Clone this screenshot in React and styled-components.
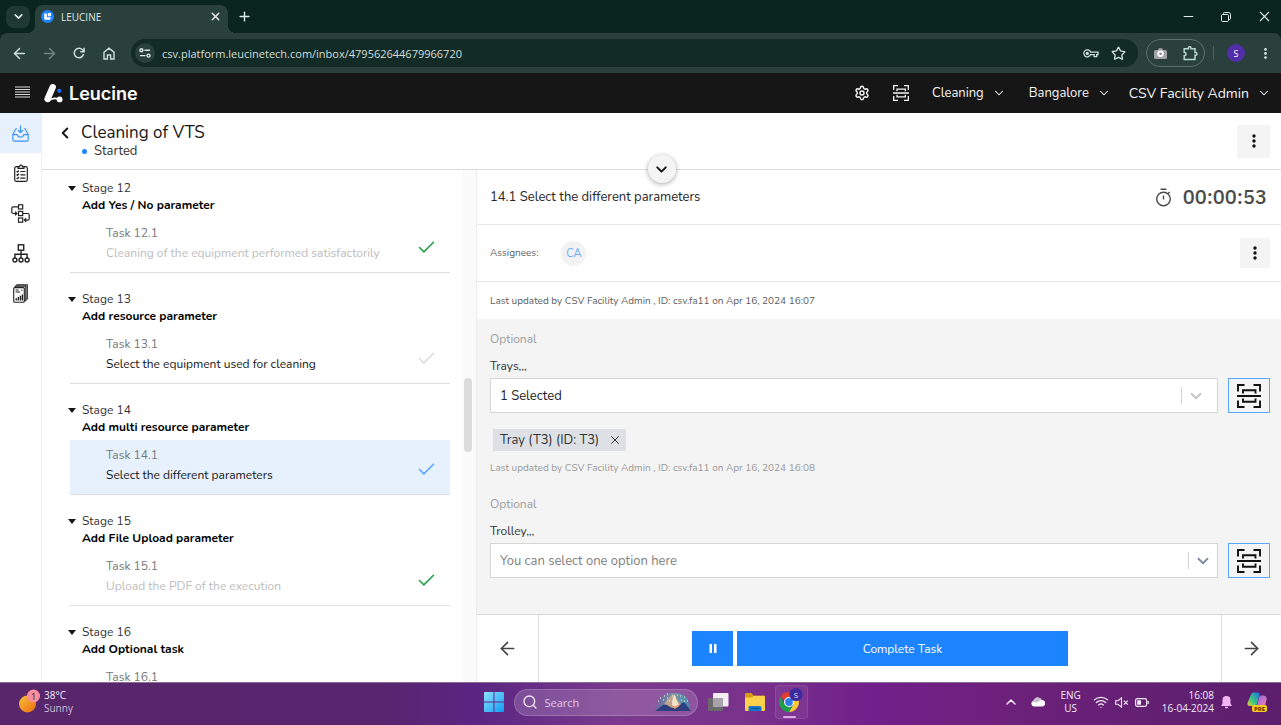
import React, { useState } from 'react';
import styled, { createGlobalStyle } from 'styled-components';
import {
  ArrowLeft,
  ArrowRight,
  Check,
  ChevronDown,
  ChevronLeft,
  ChevronUp,
  Minus,
  Plus,
  Search,
  Settings,
  Star,
  Wifi,
  X,
} from 'lucide-react';

const GlobalStyle = createGlobalStyle`
  * {
    box-sizing: border-box;
  }
  body {
    margin: 0;
    background: #fff;
    font-family: Nunito, Lato, sans-serif;
    color: #161616;
  }
  button, input, select {
    font: inherit;
    color: inherit;
  }
  svg {
    display: block;
    flex-shrink: 0;
  }
`;

const Screen = styled.div`
  display: flex;
  flex-direction: column;
  height: 100vh;
  overflow: hidden;
`;

const IconButton = styled.button`
  display: flex;
  align-items: center;
  justify-content: center;
  padding: 0;
  border: none;
  background: transparent;
  cursor: pointer;
`;

/* ---------- browser ---------- */

const TabStrip = styled.div`
  display: flex;
  align-items: center;
  height: 33px;
  flex-shrink: 0;
  padding-left: 6px;
  background: #0a2420;
  color: #dfe9e6;
  font-family: 'Segoe UI', 'Open Sans', sans-serif;
  font-size: 10px;
`;

const TabSearch = styled(IconButton)`
  width: 24px;
  height: 22px;
  border-radius: 8px;
  background: #1f3834;
`;

const Tab = styled.div`
  position: relative;
  display: flex;
  align-items: center;
  align-self: flex-end;
  width: 193px;
  height: 28px;
  margin-left: 5px;
  padding: 0 6px 5px 6px;
  gap: 7px;
  border-radius: 8px 8px 0 0;
  background: #29403c;

  /* flared bottom corners */
  &::before,
  &::after {
    content: '';
    position: absolute;
    bottom: 0;
    width: 8px;
    height: 8px;
  }
  &::before {
    right: 100%;
    background: radial-gradient(circle at 0 0, transparent 8px, #29403c 8px);
  }
  &::after {
    left: 100%;
    background: radial-gradient(circle at 100% 0, transparent 8px, #29403c 8px);
  }
`;

const TabTitle = styled.span`
  flex: 1;
`;

const NewTab = styled(IconButton)`
  margin-left: 9px;
`;

const WindowButtons = styled.div`
  display: flex;
  gap: 4px;
  margin-left: auto;
`;

const WindowButton = styled(IconButton)`
  width: 34px;
  height: 32px;
`;

const ToolbarWrap = styled.div`
  flex-shrink: 0;
  background: #0a2420;
`;

const Toolbar = styled.div`
  display: flex;
  align-items: center;
  height: 40px;
  padding: 0 9px 0 4px;
  border-radius: 7px 7px 0 0;
  background: #29403c;
  color: #cfe0dc;
  font-family: 'Segoe UI', 'Open Sans', sans-serif;
`;

const ToolButton = styled(IconButton)`
  width: 30px;
  height: 28px;
  color: ${({ $dim }) => ($dim ? '#74857f' : '#cfe0dc')};
`;

const AddressBar = styled.div`
  display: flex;
  align-items: center;
  flex: 1;
  height: 28px;
  margin-left: 7px;
  padding: 0 12px 0 4px;
  gap: 7px;
  border-radius: 14px;
  background: #122b27;
`;

const SiteInfo = styled(IconButton)`
  width: 20px;
  height: 20px;
  border-radius: 50%;
  background: #29403c;
`;

const UrlInput = styled.input`
  flex: 1;
  min-width: 0;
  padding: 0;
  border: none;
  outline: none;
  background: transparent;
  color: #d3dfdc;
  font-size: 11px;
`;

const AddressIcons = styled.div`
  display: flex;
  align-items: center;
  gap: 12px;
`;

const Extensions = styled.div`
  display: flex;
  align-items: center;
  justify-content: space-between;
  width: 59px;
  height: 28px;
  margin-left: 8px;
  padding: 0 6px 0 7px;
  border: 1px solid #5c706b;
  border-radius: 14px;
`;

const ToolDivider = styled.span`
  width: 1px;
  height: 14px;
  margin: 0 13px 0 8px;
  background: #4d625d;
`;

const Profile = styled(IconButton)`
  width: 18px;
  height: 18px;
  margin-right: 14px;
  border-radius: 50%;
  background: #512da8;
  color: #fff;
  font-size: 9px;
`;

/* ---------- app header ---------- */

const AppHeader = styled.header`
  display: flex;
  align-items: center;
  height: 40px;
  flex-shrink: 0;
  padding: 0 10px 0 15px;
  background: #161616;
  color: #f4f4f4;
`;

const Brand = styled.a`
  display: flex;
  align-items: center;
  margin-left: 14px;
  gap: 5px;
  color: #fff;
  font-family: Gilroy, Inter, sans-serif;
  font-size: 18px;
  font-weight: 600;
  text-decoration: none;
`;

const HeaderActions = styled.nav`
  display: flex;
  align-items: center;
  margin-left: auto;
  gap: 23px;
`;

const HeaderMenu = styled(IconButton)`
  gap: 8px;
  margin-left: ${({ $user }) => ($user ? '-5px' : '0')};
  font-size: ${({ $user }) => ($user ? '14px' : '13px')};
`;

/* ---------- shell ---------- */

const Body = styled.div`
  display: flex;
  flex: 1;
  min-height: 0;
`;

const SideNav = styled.nav`
  width: 42px;
  flex-shrink: 0;
  border-right: 1px solid #f0f0f0;
`;

const SideItem = styled.a`
  display: flex;
  align-items: center;
  justify-content: center;
  height: 40px;
  background: ${({ $active }) => ($active ? '#e7f1fd' : 'transparent')};
  color: ${({ $active }) => ($active ? '#3c91ff' : '#222')};
`;

const Main = styled.main`
  position: relative;
  display: flex;
  flex-direction: column;
  flex: 1;
  min-width: 0;
`;

const JobHeader = styled.div`
  display: flex;
  align-items: center;
  justify-content: space-between;
  height: 57px;
  flex-shrink: 0;
  padding: 0 11px 0 16px;
  border-bottom: 1px solid #dcdcdc;
`;

const JobInfo = styled.div`
  display: grid;
  grid-template-columns: 14px auto;
  column-gap: 9px;
  align-items: center;
`;

const JobTitle = styled.h1`
  margin: 0;
  font-size: 17px;
  font-weight: 400;
  line-height: 20px;
`;

const JobState = styled.div`
  grid-column: 2;
  display: flex;
  align-items: center;
  gap: 7px;
  padding-left: 1px;
  font-size: 13px;
  line-height: 16px;
  color: #333;

  &::before {
    content: '';
    width: 5px;
    height: 5px;
    border-radius: 50%;
    background: #1d84ff;
  }
`;

const MoreButton = styled(IconButton)`
  width: ${({ $small }) => ($small ? '30px' : '33px')};
  height: ${({ $small }) => ($small ? '30px' : '33px')};
  background: #f4f4f4;
  color: #111;
`;

const ExpandButton = styled(IconButton)`
  position: absolute;
  top: 42px;
  left: 50%;
  z-index: 1;
  width: 28px;
  height: 28px;
  margin-left: -14px;
  border-radius: 50%;
  background: #f4f4f4;
  box-shadow: 0 1px 5px rgba(0, 0, 0, 0.35);
`;

const Columns = styled.div`
  display: flex;
  flex: 1;
  min-height: 0;
`;

/* ---------- stages ---------- */

const StageList = styled.div`
  width: 408px;
  flex-shrink: 0;
  overflow: hidden;
  padding: 9px 0 0 28px;
`;

const Stage = styled.section`
  margin-bottom: 17px;
`;

const StageHead = styled.div`
  display: grid;
  grid-template-columns: 14px auto;
  align-items: center;
  margin: 0 0 4px -2px;
  font-size: 12px;
  line-height: 18px;
  color: #333;
`;

const Caret = styled.span`
  border: 4px solid transparent;
  border-top: 5px solid #161616;
  border-bottom: none;
  justify-self: start;
`;

const StageName = styled.h2`
  grid-column: 2;
  margin: 0;
  font-size: 12px;
  font-weight: 700;
  line-height: 17px;
  color: #000;
`;

const Task = styled.a`
  display: flex;
  align-items: center;
  height: 55px;
  padding: 0 13px 0 36px;
  border-bottom: 1px solid #e0e0e0;
  background: ${({ $active }) => ($active ? '#e7f1fd' : '#fff')};
  color: ${({ $done }) => ($done ? '#bdbdbd' : '#161616')};
  font-size: 12px;
  line-height: 20px;
  text-decoration: none;
`;

const TaskText = styled.span`
  flex: 1;
  align-self: flex-start;
  padding-top: 5px;
`;

const TaskId = styled.span`
  display: block;
  color: #787878;
`;

const TaskCheck = styled(Check)`
  margin-top: 4px;
`;

const ScrollGutter = styled.div`
  width: 14px;
  margin-left: 12px;
  flex-shrink: 0;
  padding: 208px 4px 0 2px;
  background: #fafafa;
`;

const ScrollThumb = styled.div`
  height: 74px;
  border-radius: 4px;
  background: #dcdcdc;
`;

/* ---------- task panel ---------- */

const Panel = styled.section`
  display: flex;
  flex-direction: column;
  flex: 1;
  min-width: 0;
  border-left: 1px solid #ececec;
`;

const PanelRow = styled.div`
  display: flex;
  align-items: center;
  height: ${({ $height }) => $height}px;
  flex-shrink: 0;
  padding: 0 11px 0 13px;
  border-bottom: 1px solid ${({ $plain }) => ($plain ? '#f4f4f4' : '#e8e8e8')};
  font-size: 10px;
  color: #5c5c5c;
`;

const TaskTitle = styled.h2`
  margin: 0;
  font-size: 13px;
  font-weight: 400;
  color: #262626;
`;

const Timer = styled.div`
  display: flex;
  align-items: center;
  gap: 11px;
  margin-left: auto;
  padding-right: 3px;
  font-family: 'IBM Plex Sans', Inter, sans-serif;
  font-size: 20px;
  font-weight: 500;
  line-height: 20px;
  color: #4b4b4b;
`;

const Avatar = styled.span`
  display: flex;
  align-items: center;
  justify-content: center;
  width: 25px;
  height: 25px;
  margin: 0 auto 0 23px;
  border-radius: 50%;
  background: #f2f2f2;
  color: #6aabff;
  font-size: 11px;
`;

const Form = styled.div`
  flex: 1;
  min-height: 0;
  overflow: hidden;
  padding: 10px 11px 0 13px;
  background: #f4f4f4;
`;

const Field = styled.div`
  height: 165px;
`;

const Optional = styled.p`
  margin: 0 0 8px;
  font-size: 12px;
  line-height: 18px;
  color: #9c9c9c;
`;

const FieldLabel = styled.label`
  display: block;
  margin-bottom: 2px;
  font-size: 12px;
  line-height: 20px;
  color: #333;
`;

const FieldRow = styled.div`
  display: flex;
  gap: 10px;
`;

const SelectBox = styled.div`
  display: flex;
  align-items: center;
  flex: 1;
  height: 35px;
  padding-right: ${({ $empty }) => ($empty ? '5px' : '12px')};
  gap: 5px;
  border: 1px solid #d6d6d6;
  background: #fff;
  color: ${({ $empty }) => ($empty ? '#7d8ba3' : '#c4c4c4')};
`;

const Select = styled.select`
  flex: 1;
  height: 100%;
  padding: 0 9px;
  border: none;
  outline: none;
  appearance: none;
  background: transparent;
  font-size: 13px;
  color: ${({ $empty }) => ($empty ? '#808080' : '#222')};
`;

const SelectDivider = styled.span`
  width: 1px;
  height: 17px;
  background: #d4d4d4;
`;

const ScanButton = styled(IconButton)`
  width: 42px;
  height: 35px;
  border: 1px solid #5aa5ff;
  background: #f4f4f4;
  color: #111;
`;

const Chip = styled.div`
  display: inline-flex;
  align-items: center;
  height: 22px;
  margin: 16px 0 0 3px;
  padding: 0 4px 0 7px;
  gap: 9px;
  background: #dde1e6;
  color: #333;
  font-size: 13px;
`;

const UpdatedNote = styled.p`
  margin: 8px 0 0;
  font-size: 10px;
  line-height: 18px;
  color: #999;
`;

const PanelFooter = styled.footer`
  display: flex;
  height: 68px;
  flex-shrink: 0;
  border-top: 1px solid #d8d8d8;
`;

const StepButton = styled(IconButton)`
  width: ${({ $next }) => ($next ? '60px' : '62px')};
  color: #444;
  border-left: ${({ $next }) => ($next ? '1px solid #e0e0e0' : 'none')};
  border-right: ${({ $next }) => ($next ? 'none' : '1px solid #e0e0e0')};
`;

const FooterActions = styled.div`
  display: flex;
  align-items: center;
  justify-content: center;
  flex: 1;
  gap: 4px;
`;

const PrimaryButton = styled(IconButton)`
  width: ${({ $wide }) => ($wide ? '331px' : '41px')};
  height: 35px;
  background: #1d84ff;
  color: #fff;
  font-size: 12px;
`;

/* ---------- taskbar ---------- */

const Taskbar = styled.div`
  display: grid;
  grid-template-columns: 1fr auto 1fr;
  align-items: center;
  height: 43px;
  flex-shrink: 0;
  padding: 0 13px 4px 17px;
  background: linear-gradient(90deg, #57266b 0%, #57266f 30%, #5a2582 37%, #7a3a8e 48%, #79328c 58%, #70208a 68%, #6c2179 80%, #5b1f6d 100%);
  border-top: 1px solid #8a6a96;
  color: #f3eaf6;
  font-family: 'Segoe UI', 'Open Sans', sans-serif;
  font-size: 10px;
  line-height: 13px;
`;

const Weather = styled(IconButton)`
  justify-self: start;
  gap: 4px;
  text-align: left;
`;

const Dim = styled.span`
  color: #cdbdd6;
`;

const TaskbarApps = styled.div`
  display: flex;
  align-items: center;
  gap: 10px;
  margin-left: 6px;
`;

const SearchBox = styled.label`
  display: flex;
  align-items: center;
  width: 184px;
  height: 27px;
  padding: 0 6px 0 7px;
  gap: 7px;
  border: 1px solid rgba(255, 255, 255, 0.18);
  border-radius: 14px;
  background: rgba(255, 255, 255, 0.16);
`;

const SearchInput = styled.input`
  flex: 1;
  min-width: 0;
  padding: 0;
  border: none;
  outline: none;
  background: transparent;
  font-size: 11px;

  &::placeholder {
    color: #ddcbe6;
    opacity: 1;
  }
`;

const FilesButton = styled(IconButton)`
  margin-left: 6px;
`;

const OpenApp = styled(IconButton)`
  width: 33px;
  height: 34px;
  border: 1px solid rgba(255, 255, 255, 0.1);
  border-radius: 4px;
  background: rgba(255, 255, 255, 0.06);
`;

const Tray = styled.div`
  display: flex;
  align-items: center;
  justify-self: end;
`;

const TrayText = styled.div`
  margin: ${({ $margin }) => $margin};
  text-align: ${({ $align }) => $align};
  white-space: nowrap;
`;

const TrayIcons = styled.div`
  display: flex;
  align-items: center;
  gap: ${({ $gap }) => $gap}px;
`;

/* ---------- drawings ---------- */

const ScanIcon = ({ size, stroke = 1.9 }) => (
  <svg width={size} height={size} viewBox="0 0 24 24" fill="none" stroke="currentColor" strokeWidth={stroke}>
    <path d="M1 7.500V1h6.500M16.500 1H23v6.500M23 16.500V23h-6.500M7.500 23H1v-6.500M0 12h24M6 9.500V6.200h12.500v3.300M6 14.500v3.300h12.500v-3.300" />
  </svg>
);

const DotsIcon = ({ size = 16 }) => (
  <svg width={size} height={size} viewBox="0 0 16 16" fill="currentColor">
    <circle cx="8" cy="3" r="1.700" />
    <circle cx="8" cy="8" r="1.700" />
    <circle cx="8" cy="13" r="1.700" />
  </svg>
);

const FaviconIcon = () => (
  <svg width="13" height="13" viewBox="0 0 13 13">
    <circle cx="6.500" cy="6.500" r="6.500" fill="#1d84ff" />
    <path d="M3.200 3.400h2.600v3.800h3.800v1.200a1.300 1.300 0 0 1-1.300 1.300H4.500a1.300 1.300 0 0 1-1.300-1.300z" fill="#fff" />
    <path d="M6.800 2.900h3.200v2.100a1.200 1.200 0 0 1-1.200 1.200h-2z" fill="#fff" />
  </svg>
);

const ReloadIcon = () => (
  <svg width="12" height="12" viewBox="0 0 12 12" fill="none" stroke="currentColor" strokeWidth="1.500">
    <path d="M10.600 7A4.700 4.700 0 1 1 9.400 2.800L11 4.400" />
    <path d="M11.100.7v4H7.200" />
  </svg>
);

const HomeIcon = () => (
  <svg width="12" height="13" viewBox="0 0 12 13" fill="none" stroke="currentColor" strokeWidth="1.400">
    <path d="M1 5.200L6 1.200l5 4V12H7.600V8H4.400v4H1z" />
  </svg>
);

const TuneIcon = () => (
  <svg width="12" height="10" viewBox="0 0 12 10" fill="none" stroke="#dfe9e6" strokeWidth="1.400">
    <circle cx="2.400" cy="2.200" r="1.500" />
    <path d="M5.500 2.200H11M1 7.600h5.500" />
    <circle cx="9.500" cy="7.600" r="1.500" />
  </svg>
);

const KeyIcon = () => (
  <svg width="16" height="9" viewBox="0 0 16 9" fill="none" stroke="currentColor" strokeWidth="1.300">
    <path d="M7.600 3.100H15v2.500h-1.300v2.100h-2.500V5.600H7.600a3.500 3.500 0 1 1 0-2.500z" />
    <circle cx="4.300" cy="4.400" r="1" fill="currentColor" />
  </svg>
);

const CameraIcon = () => (
  <svg width="13" height="11" viewBox="0 0 13 11">
    <path d="M1.500 2H4L4.800.3h3.400L9 2h2.500A1.500 1.500 0 0 1 13 3.500v6a1.500 1.500 0 0 1-1.500 1.500h-10A1.500 1.500 0 0 1 0 9.500v-6A1.500 1.500 0 0 1 1.500 2z" fill="#a3a3a3" />
    <circle cx="6.500" cy="5.800" r="3.200" fill="#fff" />
    <circle cx="6.500" cy="5.800" r="1.400" fill="#8b8b8b" />
  </svg>
);

const PuzzleIcon = () => (
  <svg width="15" height="15" viewBox="0 0 15 15" fill="none" stroke="#b6d8d0" strokeWidth="1.500">
    <path d="M1.200 2.800h4.200V2a1.300 1.300 0 0 1 2.600 0v.8h4V6.500h.6a1.400 1.400 0 0 1 0 2.800H12v4.200H1.200V9.800A1.700 1.700 0 0 0 1.200 6.300z" />
  </svg>
);

const RestoreIcon = () => (
  <svg width="10" height="10" viewBox="0 0 10 10" fill="none" stroke="currentColor">
    <rect x=".5" y="2.500" width="7" height="7" rx="1" />
    <path d="M2.500 2.500V1.500a1 1 0 0 1 1-1h4a2 2 0 0 1 2 2v4a1 1 0 0 1-1 1h-1" />
  </svg>
);

const BurgerIcon = () => (
  <svg width="15" height="14" viewBox="0 0 15 14" stroke="#d8d8d8" strokeWidth="1.100">
    <path d="M0 1h15M0 3.500h15M0 6h15M0 8.500h15M0 11h15" />
  </svg>
);

const LogoIcon = () => (
  <svg width="20" height="20" viewBox="0 0 20 20">
    <path d="M3.600 16L8.700 4.200" stroke="#fff" strokeWidth="6.400" strokeLinecap="round" />
    <path d="M4 18.500Q9 13.500 15 16.500" stroke="#fff" strokeWidth="1.800" fill="none" />
    <circle cx="15.600" cy="16.400" r="2.900" fill="#fff" />
    <circle cx="15.300" cy="7.800" r="2.100" fill="#1d6bff" />
  </svg>
);

const InboxIcon = () => (
  <svg width="17" height="17" viewBox="0 0 17 17" fill="none" stroke="currentColor" strokeWidth="1.100" strokeLinejoin="round">
    <path d="M8.500.5v7M5.900 5l2.600 2.600L11.100 5" />
    <path d="M5 3.800H3.900L.8 9.500v5.300a1.300 1.300 0 0 0 1.300 1.300h12.800a1.300 1.300 0 0 0 1.300-1.300V9.500l-3.100-5.700H12" />
    <path d="M.8 9.600h4.400a3.400 3.400 0 0 0 6.600 0h4.400" />
  </svg>
);

const ChecklistIcon = () => (
  <svg width="14" height="18" viewBox="0 0 14 18" fill="none" stroke="currentColor" strokeWidth="1.200">
    <path d="M4 2.700H2.200A1.500 1.500 0 0 0 .7 4.200v11.600a1.500 1.500 0 0 0 1.500 1.500h9.600a1.500 1.500 0 0 0 1.500-1.500V4.200a1.500 1.500 0 0 0-1.500-1.500H10" />
    <path d="M4 4.300V2.600h1.500a1.500 1.500 0 0 1 3 0H10v1.700z" />
    <path d="M2.600 7.200l.9.900 1.500-1.700M2.600 10.500l.9.900L5 9.700M2.600 13.800l.9.900L5 13M6.400 7.500h5M6.400 10.800h5M6.400 14.100h5" />
  </svg>
);

const FlowIcon = () => (
  <svg width="19" height="19" viewBox="0 0 19 19" fill="none" stroke="currentColor" strokeWidth="1.200">
    <rect x="7.500" y=".8" width="4.200" height="4.200" />
    <rect x="7.500" y="7.400" width="4.200" height="4.200" />
    <rect x="7.500" y="14" width="4.200" height="4.200" />
    <path d="M7.500 2.900H2.200A1.400 1.400 0 0 0 .8 4.300v3.800a1.400 1.400 0 0 0 1.400 1.400h3.500M4 7.700l1.900 1.800L4 11.300" />
    <path d="M11.700 9.500h5.100a1.400 1.400 0 0 1 1.400 1.400v3.800a1.400 1.400 0 0 1-1.400 1.400h-3.300M15.200 14.300l-1.900 1.800 1.900 1.800" />
  </svg>
);

const TreeIcon = () => (
  <svg width="18" height="19" viewBox="0 0 18 19" fill="none" stroke="currentColor" strokeWidth="1.400">
    <rect x="6.300" y=".8" width="5.400" height="5.400" />
    <path d="M9 6.200v8M2.900 14.200v-4h12.200v4" />
    <circle cx="2.900" cy="16" r="2" />
    <circle cx="9" cy="16" r="2" />
    <circle cx="15.100" cy="16" r="2" />
  </svg>
);

const ReportIcon = () => (
  <svg width="15" height="19" viewBox="0 0 15 19" fill="none" stroke="currentColor" strokeWidth="1.100">
    <rect x=".7" y="3.600" width="10.600" height="14.700" rx="1" />
    <path d="M2.300 3.600V2.100h10.500v14.500h-1.500M3.900 2.100V.7h10.400V15h-1.500" />
    <path d="M2.600 6h3M2.600 8h4.500M8.300 6.200h1.300" />
    <path d="M3.200 16.500v-2.200M5.300 16.500v-3.500M7.400 16.500v-4.700M9.400 16.500v-6" strokeWidth="1.400" />
  </svg>
);

const StopwatchIcon = () => (
  <svg width="17" height="19" viewBox="0 0 17 19" fill="none" stroke="currentColor" strokeWidth="1.400">
    <circle cx="8.500" cy="11" r="6.800" />
    <path d="M5.600 1.200h5.800M8.500 7.400v4.200M13 5.600l1.700-1.700" />
  </svg>
);

const PauseIcon = () => (
  <svg width="8" height="9" viewBox="0 0 8 9" fill="#fff">
    <path d="M.5 0H3v9H.5zM5 0h2.500v9H5z" />
  </svg>
);

const WeatherIcon = () => (
  <svg width="23" height="26" viewBox="0 0 23 26">
    <defs>
      <linearGradient id="sun" x1="0" y1="0" x2="1" y2="1">
        <stop offset="0" stopColor="#f6c13a" />
        <stop offset="1" stopColor="#ef6a10" />
      </linearGradient>
    </defs>
    <circle cx="10.500" cy="15" r="8.500" fill="url(#sun)" />
    <circle cx="16.500" cy="7" r="6.500" fill="#f98f9c" />
    <text x="16.500" y="10.500" textAnchor="middle" fontSize="9" fill="#3c1420">1</text>
  </svg>
);

const WindowsIcon = () => (
  <svg width="20" height="20" viewBox="0 0 20 20">
    <defs>
      <linearGradient id="win" x1="0" y1="0" x2="1" y2="1">
        <stop offset="0" stopColor="#8fe3ff" />
        <stop offset="1" stopColor="#0d9bf2" />
      </linearGradient>
    </defs>
    <path d="M0 1a1 1 0 0 1 1-1h8.500v9.500H0zM10.500 0H19a1 1 0 0 1 1 1v8.500h-9.500zM0 10.500h9.500V20H1a1 1 0 0 1-1-1zM10.500 10.500H20V19a1 1 0 0 1-1 1h-8.500z" fill="url(#win)" />
  </svg>
);

const SceneIcon = () => (
  <svg width="36" height="20" viewBox="0 0 36 20">
    <defs>
      <linearGradient id="sky" x1="0" y1="0" x2="1" y2="0">
        <stop offset="0" stopColor="#3c8ea5" stopOpacity=".3" />
        <stop offset=".5" stopColor="#7c9aa8" stopOpacity=".9" />
        <stop offset="1" stopColor="#2ba3b5" stopOpacity=".7" />
      </linearGradient>
    </defs>
    <path d="M1 18Q2 8 8 4t12-3q10 0 13 7l2 10z" fill="url(#sky)" />
    <path d="M8 15Q11 7 17 3q3-2 4 2 2 5 7 10z" fill="#b9a592" />
    <path d="M17 13q0-6 2-10 1.500 0 2 4l3 6-4 2z" fill="#f3e0c8" />
    <path d="M0 19l8-6q2-1 4 0l5 3h5l5-5q1.500-1 3 0l6 8z" fill="#2f3f82" />
    <path d="M12 12l7 3 6-3-5 5z" fill="#ef9158" />
    <path d="M3 9h1M5 6h1M9 4h1M12 2h1M25 4h1M29 5h1M32 9h1M8 8h1M12 6h1M14 9h1M26 8h1M29 9h1M17 4h1M22 3h1" stroke="#fff3cf" strokeWidth="1.200" />
  </svg>
);

const TaskViewIcon = () => (
  <svg width="21" height="19" viewBox="0 0 21 19">
    <rect x="0" y="5" width="15" height="13" rx="1" fill="#6a6a6a" />
    <rect x="5" y="0" width="15.500" height="13.500" rx="1" fill="#f2eef4" />
    <path d="M5 5h10v8.500H5z" fill="#a8a3ab" />
  </svg>
);

const FolderIcon = () => (
  <svg width="20" height="18" viewBox="0 0 20 18">
    <path d="M0 1a1 1 0 0 1 1-1h5.500l2 2.500H19a1 1 0 0 1 1 1V16H0z" fill="#dc9a12" />
    <path d="M0 4.500h7l1.500-1.500H19a1 1 0 0 1 1 1V17a1 1 0 0 1-1 1H1a1 1 0 0 1-1-1z" fill="#fbd04a" />
    <path d="M3.500 18v-3.500a1.500 1.500 0 0 1 1.500-1.500h10a1.500 1.500 0 0 1 1.500 1.500V18z" fill="#1477c9" />
    <path d="M6 15.500h8" stroke="#0a4f94" />
  </svg>
);

const ChromeIcon = () => (
  <svg width="25" height="32" viewBox="0 0 25 32">
    <path d="M10 16L1.340 11A10 10 0 0 1 18.660 11z" fill="#e33b2e" />
    <path d="M10 11h8.660A10 10 0 0 1 10 26l4.300-7.500z" fill="#fcc934" />
    <path d="M5.700 18.500L1.340 11A10 10 0 0 0 10 26l4.300-7.500z" fill="#1e9e4a" />
    <circle cx="10" cy="16" r="5" fill="#fff" />
    <circle cx="10" cy="16" r="3.900" fill="#2f7de9" />
    <circle cx="17" cy="8.500" r="6.600" fill="#3d2a9c" />
    <text x="17" y="11.500" textAnchor="middle" fontSize="8" fill="#e9e4ff">S</text>
    <rect x="4" y="30" width="13" height="2" rx="1" fill="#dfa6e8" />
  </svg>
);

const CloudIcon = () => (
  <svg width="14" height="10" viewBox="0 0 14 10">
    <path d="M3 9.500A3 3 0 0 1 2.700 3.600 4.300 4.300 0 0 1 10.800 3a3.200 3.200 0 0 1 .2 6.500z" fill="#fff" />
    <path d="M.6 5.200A3 3 0 0 1 2.700 3.600 4.300 4.300 0 0 1 10.800 3q-3 0-4.300 2.600-3-1.600-5.900-.4z" fill="#c9bed2" />
  </svg>
);

const MuteIcon = () => (
  <svg width="14" height="11" viewBox="0 0 14 11" fill="none" stroke="currentColor" strokeWidth="1.100">
    <path d="M.6 3.700H3L6.500.9v9.200L3 7.300H.6zM8.800 3.600l4 4M12.800 3.600l-4 4" />
  </svg>
);

const BatteryIcon = () => (
  <svg width="14" height="9" viewBox="0 0 14 9">
    <rect x=".6" y=".6" width="11" height="7.800" rx="1.800" fill="none" stroke="currentColor" strokeWidth="1.200" />
    <path d="M2.200 2.200H6v4.600H2.200zM12.500 3h1.300v3h-1.300z" fill="currentColor" />
  </svg>
);

const BellIcon = () => (
  <svg width="11" height="13" viewBox="0 0 11 13">
    <path d="M5.500 0a4 4 0 0 1 4 4v3.500L11 10H0l1.500-2.500V4a4 4 0 0 1 4-4zM3.800 10.800h3.400a1.700 1.700 0 0 1-3.400 0z" fill="#efb6f2" />
  </svg>
);

const CopilotIcon = () => (
  <svg width="21" height="21" viewBox="0 0 21 21">
    <defs>
      <linearGradient id="copA" x1="0" y1="1" x2="1" y2="0">
        <stop offset="0" stopColor="#f3d03b" />
        <stop offset=".4" stopColor="#3fc77c" />
        <stop offset="1" stopColor="#1676e8" />
      </linearGradient>
      <linearGradient id="copB" x1="0" y1="0" x2="1" y2="1">
        <stop offset="0" stopColor="#8c5cf0" />
        <stop offset="1" stopColor="#f58aa0" />
      </linearGradient>
    </defs>
    <path d="M4 2.500Q4.700.5 6.500.5H11q2 0 1.500 2L10 12q-.5 2-2.500 2H3q-3 0-2.500-3z" fill="url(#copA)" />
    <path d="M12 5.500q.5-2 2-2h2.500Q20 4 19.500 7.500L18 14h-8z" fill="url(#copB)" />
    <rect x="5" y="13" width="15" height="7" rx="2" fill="#ffcb1f" />
    <text x="12.500" y="18.700" textAnchor="middle" fontSize="6" fontWeight="700" fill="#3a2a00">PRE</text>
  </svg>
);

/* ---------- data ---------- */

const STAGES = [
  { id: 12, name: 'Add Yes / No parameter', task: 'Cleaning of the equipment performed satisfactorily', state: 'done' },
  { id: 13, name: 'Add resource parameter', task: 'Select the equipment used for cleaning', state: 'pending' },
  { id: 14, name: 'Add multi resource parameter', task: 'Select the different parameters', state: 'active' },
  { id: 15, name: 'Add File Upload parameter', task: 'Upload the PDF of the execution', state: 'done' },
  { id: 16, name: 'Add Optional task', task: '', state: 'pending' },
];

const CHECK_COLORS = { done: '#24a148', pending: '#dcdcdc', active: '#5aa5ff' };

const NAV = [
  { label: 'Inbox', Icon: InboxIcon },
  { label: 'Jobs', Icon: ChecklistIcon },
  { label: 'Processes', Icon: FlowIcon },
  { label: 'Ontology', Icon: TreeIcon },
  { label: 'Reports', Icon: ReportIcon },
];

const BrowserChrome = () => (
  <>
    <TabStrip>
      <TabSearch aria-label="Search tabs"><ChevronDown size={13} strokeWidth={3} /></TabSearch>
      <Tab>
        <FaviconIcon />
        <TabTitle>LEUCINE</TabTitle>
        <IconButton aria-label="Close tab"><X size={13} strokeWidth={2.800} /></IconButton>
      </Tab>
      <NewTab aria-label="New tab"><Plus size={15} strokeWidth={2.300} /></NewTab>
      <WindowButtons>
        <WindowButton aria-label="Minimize"><Minus size={15} strokeWidth={1.600} /></WindowButton>
        <WindowButton aria-label="Restore"><RestoreIcon /></WindowButton>
        <WindowButton aria-label="Close"><X size={17} strokeWidth={1.500} /></WindowButton>
      </WindowButtons>
    </TabStrip>
    <ToolbarWrap>
      <Toolbar>
        <ToolButton aria-label="Back"><ArrowLeft size={17} strokeWidth={2.100} /></ToolButton>
        <ToolButton aria-label="Forward" $dim><ArrowRight size={17} strokeWidth={2.100} /></ToolButton>
        <ToolButton aria-label="Reload"><ReloadIcon /></ToolButton>
        <ToolButton aria-label="Home"><HomeIcon /></ToolButton>
        <AddressBar>
          <SiteInfo aria-label="Site information"><TuneIcon /></SiteInfo>
          <UrlInput aria-label="Address" defaultValue="csv.platform.leucinetech.com/inbox/479562644679966720" />
          <AddressIcons>
            <KeyIcon />
            <Star size={15} strokeWidth={2.200} />
          </AddressIcons>
        </AddressBar>
        <Extensions>
          <CameraIcon />
          <PuzzleIcon />
        </Extensions>
        <ToolDivider />
        <Profile aria-label="Profile">S</Profile>
        <IconButton aria-label="Menu"><DotsIcon size={13} /></IconButton>
      </Toolbar>
    </ToolbarWrap>
  </>
);

const TaskList = () => (
  <StageList>
    {STAGES.map(({ id, name, task, state }) => (
      <Stage key={id}>
        <StageHead>
          <Caret />
          <span>Stage {id}</span>
          <StageName>{name}</StageName>
        </StageHead>
        <Task href="#" $active={state === 'active'} $done={state === 'done'}>
          <TaskText>
            <TaskId>Task {id}.1</TaskId>
            {task}
          </TaskText>
          <TaskCheck size={21} strokeWidth={1.800} color={CHECK_COLORS[state]} />
        </Task>
      </Stage>
    ))}
  </StageList>
);

const TaskPanel = () => {
  const [chips, setChips] = useState(['Tray (T3) (ID: T3)']);

  return (
    <Panel>
      <PanelRow $height={55}>
        <TaskTitle>14.1 Select the different parameters</TaskTitle>
        <Timer><StopwatchIcon />00:00:53</Timer>
      </PanelRow>
      <PanelRow $height={57}>
        Assignees:
        <Avatar>CA</Avatar>
        <MoreButton aria-label="Task options" $small><DotsIcon /></MoreButton>
      </PanelRow>
      <PanelRow $height={38} $plain>
        Last updated by CSV Facility Admin , ID: csv.fa11 on Apr 16, 2024 16:07
      </PanelRow>
      <Form>
        <Field>
          <Optional>Optional</Optional>
          <FieldLabel htmlFor="trays">Trays,,,</FieldLabel>
          <FieldRow>
            <SelectBox>
              <Select id="trays"><option>{chips.length} Selected</option></Select>
              <SelectDivider />
              <ChevronDown size={18} strokeWidth={2.500} />
            </SelectBox>
            <ScanButton aria-label="Scan tray"><ScanIcon size={24} /></ScanButton>
          </FieldRow>
          {chips.map((chip) => (
            <Chip key={chip}>
              {chip}
              <IconButton aria-label="Remove" onClick={() => setChips([])}><X size={14} strokeWidth={1.700} /></IconButton>
            </Chip>
          ))}
          <UpdatedNote>Last updated by CSV Facility Admin , ID: csv.fa11 on Apr 16, 2024 16:08</UpdatedNote>
        </Field>
        <Field>
          <Optional>Optional</Optional>
          <FieldLabel htmlFor="trolley">Trolley,,,</FieldLabel>
          <FieldRow>
            <SelectBox $empty>
              <Select id="trolley" $empty><option>You can select one option here</option></Select>
              <SelectDivider />
              <ChevronDown size={18} strokeWidth={2.500} />
            </SelectBox>
            <ScanButton aria-label="Scan trolley"><ScanIcon size={24} /></ScanButton>
          </FieldRow>
        </Field>
      </Form>
      <PanelFooter>
        <StepButton aria-label="Previous task"><ArrowLeft size={21} strokeWidth={1.900} /></StepButton>
        <FooterActions>
          <PrimaryButton aria-label="Pause"><PauseIcon /></PrimaryButton>
          <PrimaryButton $wide>Complete Task</PrimaryButton>
        </FooterActions>
        <StepButton aria-label="Next task" $next><ArrowRight size={21} strokeWidth={1.900} /></StepButton>
      </PanelFooter>
    </Panel>
  );
};

const SystemBar = () => (
  <Taskbar>
    <Weather>
      <WeatherIcon />
      <span>38°C<br /><Dim>Sunny</Dim></span>
    </Weather>
    <TaskbarApps>
      <IconButton aria-label="Start"><WindowsIcon /></IconButton>
      <SearchBox>
        <Search size={16} strokeWidth={2} />
        <SearchInput aria-label="Search" placeholder="Search" />
        <SceneIcon />
      </SearchBox>
      <IconButton aria-label="Task view"><TaskViewIcon /></IconButton>
      <FilesButton aria-label="Files"><FolderIcon /></FilesButton>
      <OpenApp aria-label="Chrome"><ChromeIcon /></OpenApp>
    </TaskbarApps>
    <Tray>
      <TrayIcons $gap={12}>
        <ChevronUp size={16} strokeWidth={2.200} />
        <CloudIcon />
      </TrayIcons>
      <TrayText $margin="0 12px 0 15px" $align="center">ENG<br />US</TrayText>
      <TrayIcons $gap={6}>
        <Wifi size={16} strokeWidth={1.900} />
        <MuteIcon />
        <BatteryIcon />
      </TrayIcons>
      <TrayText $margin="0 7px 0 13px" $align="right">16:08<br />16-04-2024</TrayText>
      <TrayIcons $gap={15}>
        <BellIcon />
        <CopilotIcon />
      </TrayIcons>
    </Tray>
  </Taskbar>
);

const App = () => (
  <Screen>
    <GlobalStyle />
    <BrowserChrome />
    <AppHeader>
      <IconButton aria-label="Toggle menu"><BurgerIcon /></IconButton>
      <Brand href="#"><LogoIcon />Leucine</Brand>
      <HeaderActions>
        <IconButton aria-label="Settings"><Settings size={16} strokeWidth={2.200} /></IconButton>
        <IconButton aria-label="Scan"><ScanIcon size={16} /></IconButton>
        <HeaderMenu>Cleaning <ChevronDown size={14} strokeWidth={1.800} /></HeaderMenu>
        <HeaderMenu>Bangalore <ChevronDown size={14} strokeWidth={1.800} /></HeaderMenu>
        <HeaderMenu $user>CSV Facility Admin <ChevronDown size={14} strokeWidth={1.800} /></HeaderMenu>
      </HeaderActions>
    </AppHeader>
    <Body>
      <SideNav>
        {NAV.map(({ label, Icon }, index) => (
          <SideItem key={label} href="#" aria-label={label} $active={index === 0}><Icon /></SideItem>
        ))}
      </SideNav>
      <Main>
        <JobHeader>
          <JobInfo>
            <IconButton aria-label="Back to inbox"><ChevronLeft size={18} strokeWidth={2.500} /></IconButton>
            <JobTitle>Cleaning of VTS</JobTitle>
            <JobState>Started</JobState>
          </JobInfo>
          <MoreButton aria-label="Job options"><DotsIcon /></MoreButton>
        </JobHeader>
        <ExpandButton aria-label="Expand details"><ChevronDown size={17} strokeWidth={2.800} /></ExpandButton>
        <Columns>
          <TaskList />
          <ScrollGutter><ScrollThumb /></ScrollGutter>
          <TaskPanel />
        </Columns>
      </Main>
    </Body>
    <SystemBar />
  </Screen>
);

export default App;
